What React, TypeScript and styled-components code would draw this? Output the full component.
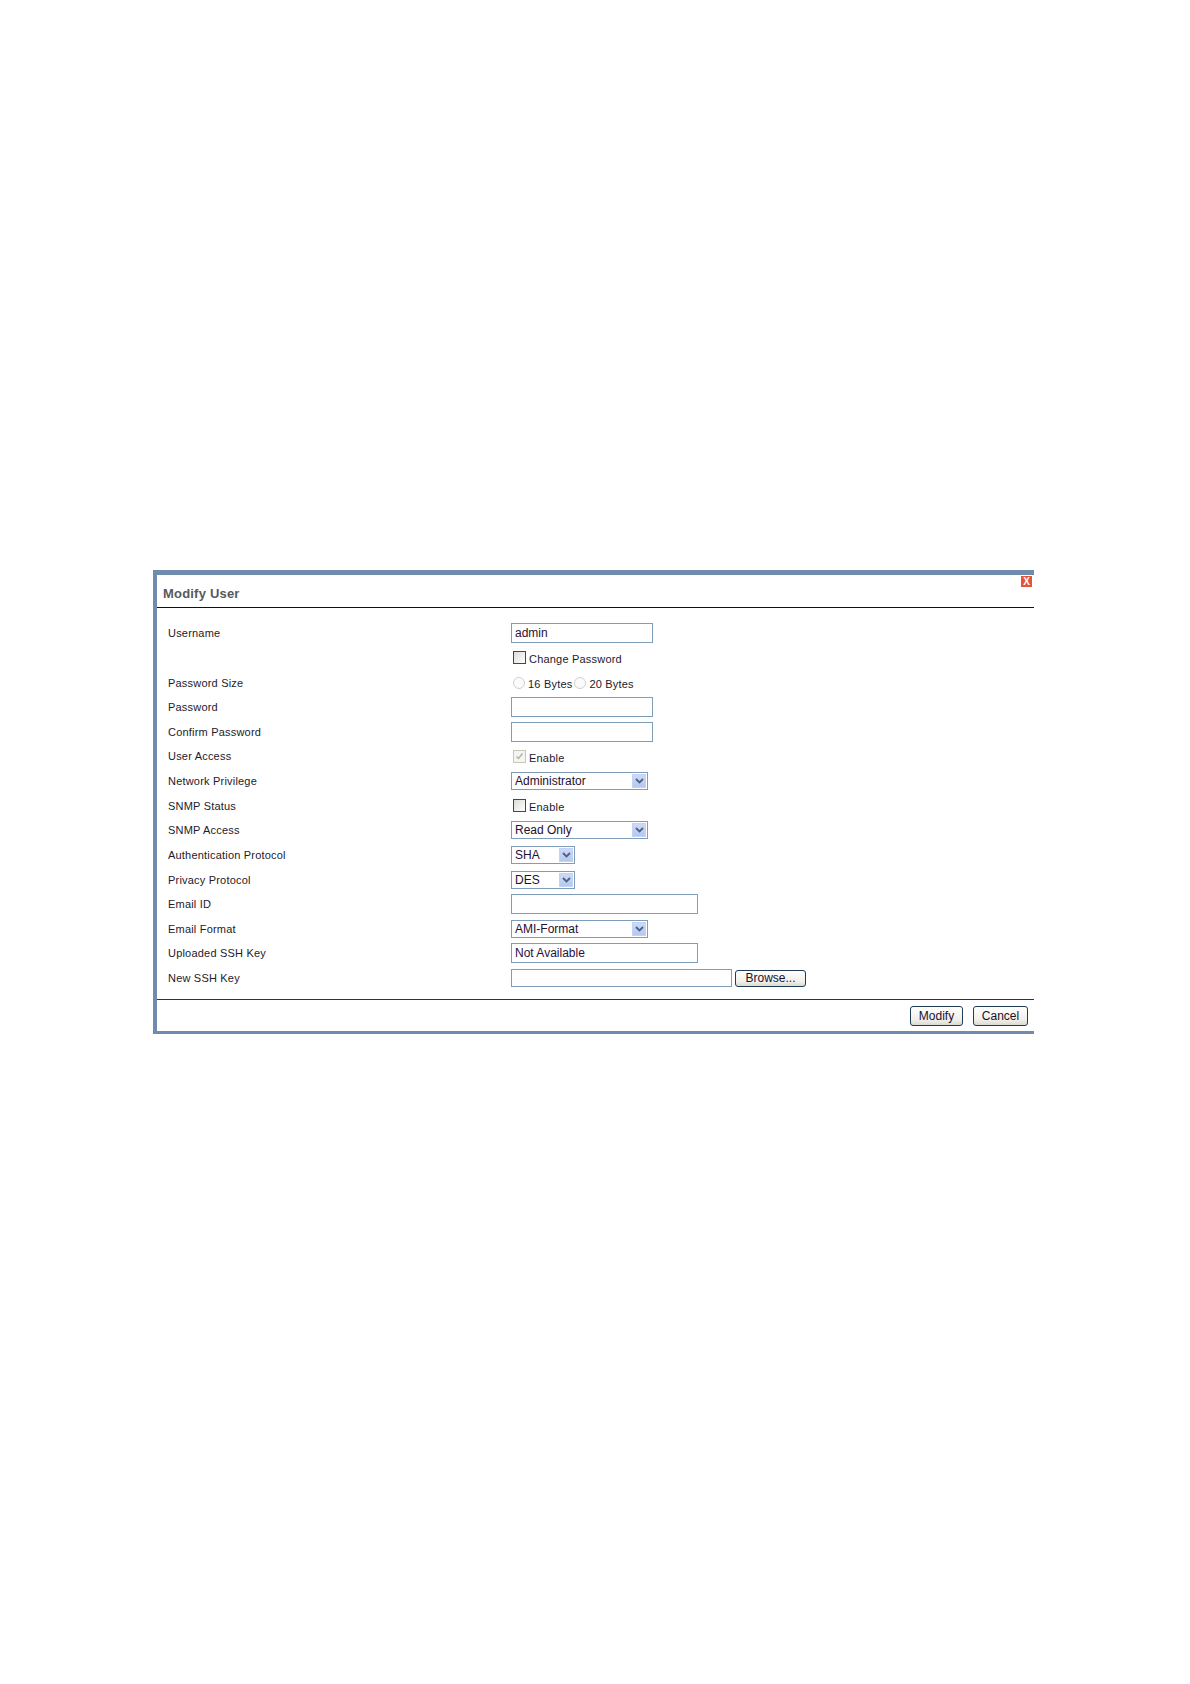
import React from "react";
import styled, { createGlobalStyle } from "styled-components";

const GlobalStyle = createGlobalStyle`
  body {
    margin: 0;
    background: #ffffff;
    font-family: "Liberation Sans", Arial, sans-serif;
  }
`;

type Row = {
  label: string;
  kind: "input" | "check" | "radios" | "select" | "file";
  value?: string;
  width?: number;
  checked?: boolean;
  disabled?: boolean;
  text?: string;
};

const rows: Row[] = [
  { label: "Username", kind: "input", value: "admin", width: 142 },
  { label: "", kind: "check", text: "Change Password" },
  { label: "Password Size", kind: "radios" },
  { label: "Password", kind: "input", width: 142 },
  { label: "Confirm Password", kind: "input", width: 142 },
  { label: "User Access", kind: "check", text: "Enable", checked: true, disabled: true },
  { label: "Network Privilege", kind: "select", value: "Administrator", width: 137 },
  { label: "SNMP Status", kind: "check", text: "Enable" },
  { label: "SNMP Access", kind: "select", value: "Read Only", width: 137 },
  { label: "Authentication Protocol", kind: "select", value: "SHA", width: 64 },
  { label: "Privacy Protocol", kind: "select", value: "DES", width: 64 },
  { label: "Email ID", kind: "input", width: 187 },
  { label: "Email Format", kind: "select", value: "AMI-Format", width: 137 },
  { label: "Uploaded SSH Key", kind: "input", value: "Not Available", width: 187 },
  { label: "New SSH Key", kind: "file", width: 221 },
];

const Chevron = () => (
  <svg width="9" height="6" viewBox="0 0 9 6">
    <path d="M1 1 L4.5 4.5 L8 1" fill="none" stroke="#4d6185" strokeWidth="1.8" />
  </svg>
);

const CheckMark = () => (
  <svg width="9" height="9" viewBox="0 0 9 9">
    <path d="M1.5 4.5 L3.5 6.5 L7.5 1.5" fill="none" stroke="#b5b2a5" strokeWidth="1.4" />
  </svg>
);

const App = () => {
  const renderControl = (row: Row) => {
    switch (row.kind) {
      case "input":
        return <TextBox $width={row.width || 142}>{row.value}</TextBox>;
      case "check":
        return (
          <Inline>
            <Box $disabled={row.disabled}>{row.checked && <CheckMark />}</Box>
            <OptionText>{row.text}</OptionText>
          </Inline>
        );
      case "radios":
        return (
          <Inline>
            <Radio />
            <OptionText>16 Bytes</OptionText>
            <Radio />
            <OptionText>20 Bytes</OptionText>
          </Inline>
        );
      case "select":
        return (
          <SelectBox $width={row.width || 137}>
            <SelectValue>{row.value}</SelectValue>
            <ArrowButton>
              <Chevron />
            </ArrowButton>
          </SelectBox>
        );
      case "file":
        return (
          <Inline>
            <TextBox $width={row.width || 221} $height={18} />
            <SmallButton $width={71}>Browse...</SmallButton>
          </Inline>
        );
    }
  };

  return (
    <Page>
      <GlobalStyle />
      <Dialog>
        <Header>
          <Title>Modify User</Title>
          <Close>X</Close>
        </Header>
        <Body>
          {rows.map((row, i) => (
            <FormRow key={i}>
              <Label>{row.label}</Label>
              {renderControl(row)}
            </FormRow>
          ))}
        </Body>
        <Footer>
          <SmallButton $width={53} $height={20}>Modify</SmallButton>
          <SmallButton $width={55} $height={20}>Cancel</SmallButton>
        </Footer>
      </Dialog>
    </Page>
  );
};

export default App;

const Page = styled.div`
  padding: 570px 0 600px 153px;
`;

const Dialog = styled.div`
  width: 881px;
  box-sizing: border-box;
  border-top: 5px solid #6f8cae;
  border-left: 4px solid #6f8cae;
  border-bottom: 3px solid #6f8cae;
  background: #ffffff;
`;

const Header = styled.div`
  position: relative;
  height: 33px;
  display: flex;
  align-items: center;
  padding: 5px 0 0 6px;
  box-sizing: border-box;
  border-bottom: 1px solid #111111;
`;

const Title = styled.div`
  font-size: 13px;
  font-weight: bold;
  color: #555a60;
  letter-spacing: 0.2px;
`;

const Close = styled.div`
  position: absolute;
  top: 1px;
  right: 2px;
  width: 11px;
  height: 11px;
  background: #e4553a;
  color: #ffffff;
  font-size: 10px;
  font-weight: bold;
  line-height: 11px;
  text-align: center;
`;

const Body = styled.div`
  padding: 13px 0 9px 11px;
`;

const FormRow = styled.div`
  display: grid;
  grid-template-columns: 343px 1fr;
  align-items: center;
  height: 24.64px;
`;

const Label = styled.div`
  font-size: 11px;
  letter-spacing: 0.2px;
  color: #231a2c;
`;

const Inline = styled.div`
  display: flex;
  align-items: center;
`;

const TextBox = styled.div<{ $width: number; $height?: number }>`
  width: ${(p) => p.$width}px;
  height: ${(p) => p.$height || 20}px;
  box-sizing: border-box;
  border: 1px solid #7f9db9;
  font-size: 12px;
  line-height: ${(p) => (p.$height || 20) - 2}px;
  padding-left: 3px;
  color: #2a0f3a;
`;

const Box = styled.div<{ $disabled?: boolean }>`
  width: 11px;
  height: 11px;
  margin-left: 2px;
  margin-right: 3px;
  border: 1px solid ${(p) => (p.$disabled ? "#cac8bb" : "#1c5180")};
  background: ${(p) => (p.$disabled ? "#f4f4f0" : "linear-gradient(135deg, #dcdcd7, #ffffff)")};
  display: flex;
  align-items: center;
  justify-content: center;
`;

const Radio = styled.div`
  width: 10px;
  height: 10px;
  border-radius: 50%;
  border: 1px solid #d0d0d0;
  background: #fbfbfb;
  margin: 0 3px 0 2px;
`;

const OptionText = styled.span`
  font-size: 11px;
  letter-spacing: 0.2px;
  color: #231a2c;
  margin-top: 3px;
`;

const SelectBox = styled.div<{ $width: number }>`
  width: ${(p) => p.$width}px;
  height: 18px;
  box-sizing: border-box;
  border: 1px solid #7f9db9;
  display: flex;
  align-items: center;
  justify-content: space-between;
  padding: 0 1px 0 3px;
`;

const SelectValue = styled.span`
  font-size: 12px;
  color: #1e1030;
`;

const ArrowButton = styled.div`
  width: 14px;
  height: 14px;
  background: linear-gradient(#cdd9f6, #b6c8ef);
  border: 1px solid #c3d3f7;
  box-sizing: border-box;
  display: flex;
  align-items: center;
  justify-content: center;
`;

const SmallButton = styled.div<{ $width: number; $height?: number }>`
  width: ${(p) => p.$width}px;
  height: ${(p) => p.$height || 17}px;
  box-sizing: border-box;
  margin-left: 3px;
  border: 1px solid #1f3b5a;
  border-radius: 3px;
  background: linear-gradient(#ffffff, #f0efe8 70%, #dcdbd2);
  font-size: 12px;
  color: #1e1030;
  display: flex;
  align-items: center;
  justify-content: center;
`;

const Footer = styled.div`
  height: 31px;
  border-top: 1px solid #333333;
  display: flex;
  justify-content: flex-end;
  align-items: center;
  gap: 7px;
  padding: 0 6px 0 0;
`;
